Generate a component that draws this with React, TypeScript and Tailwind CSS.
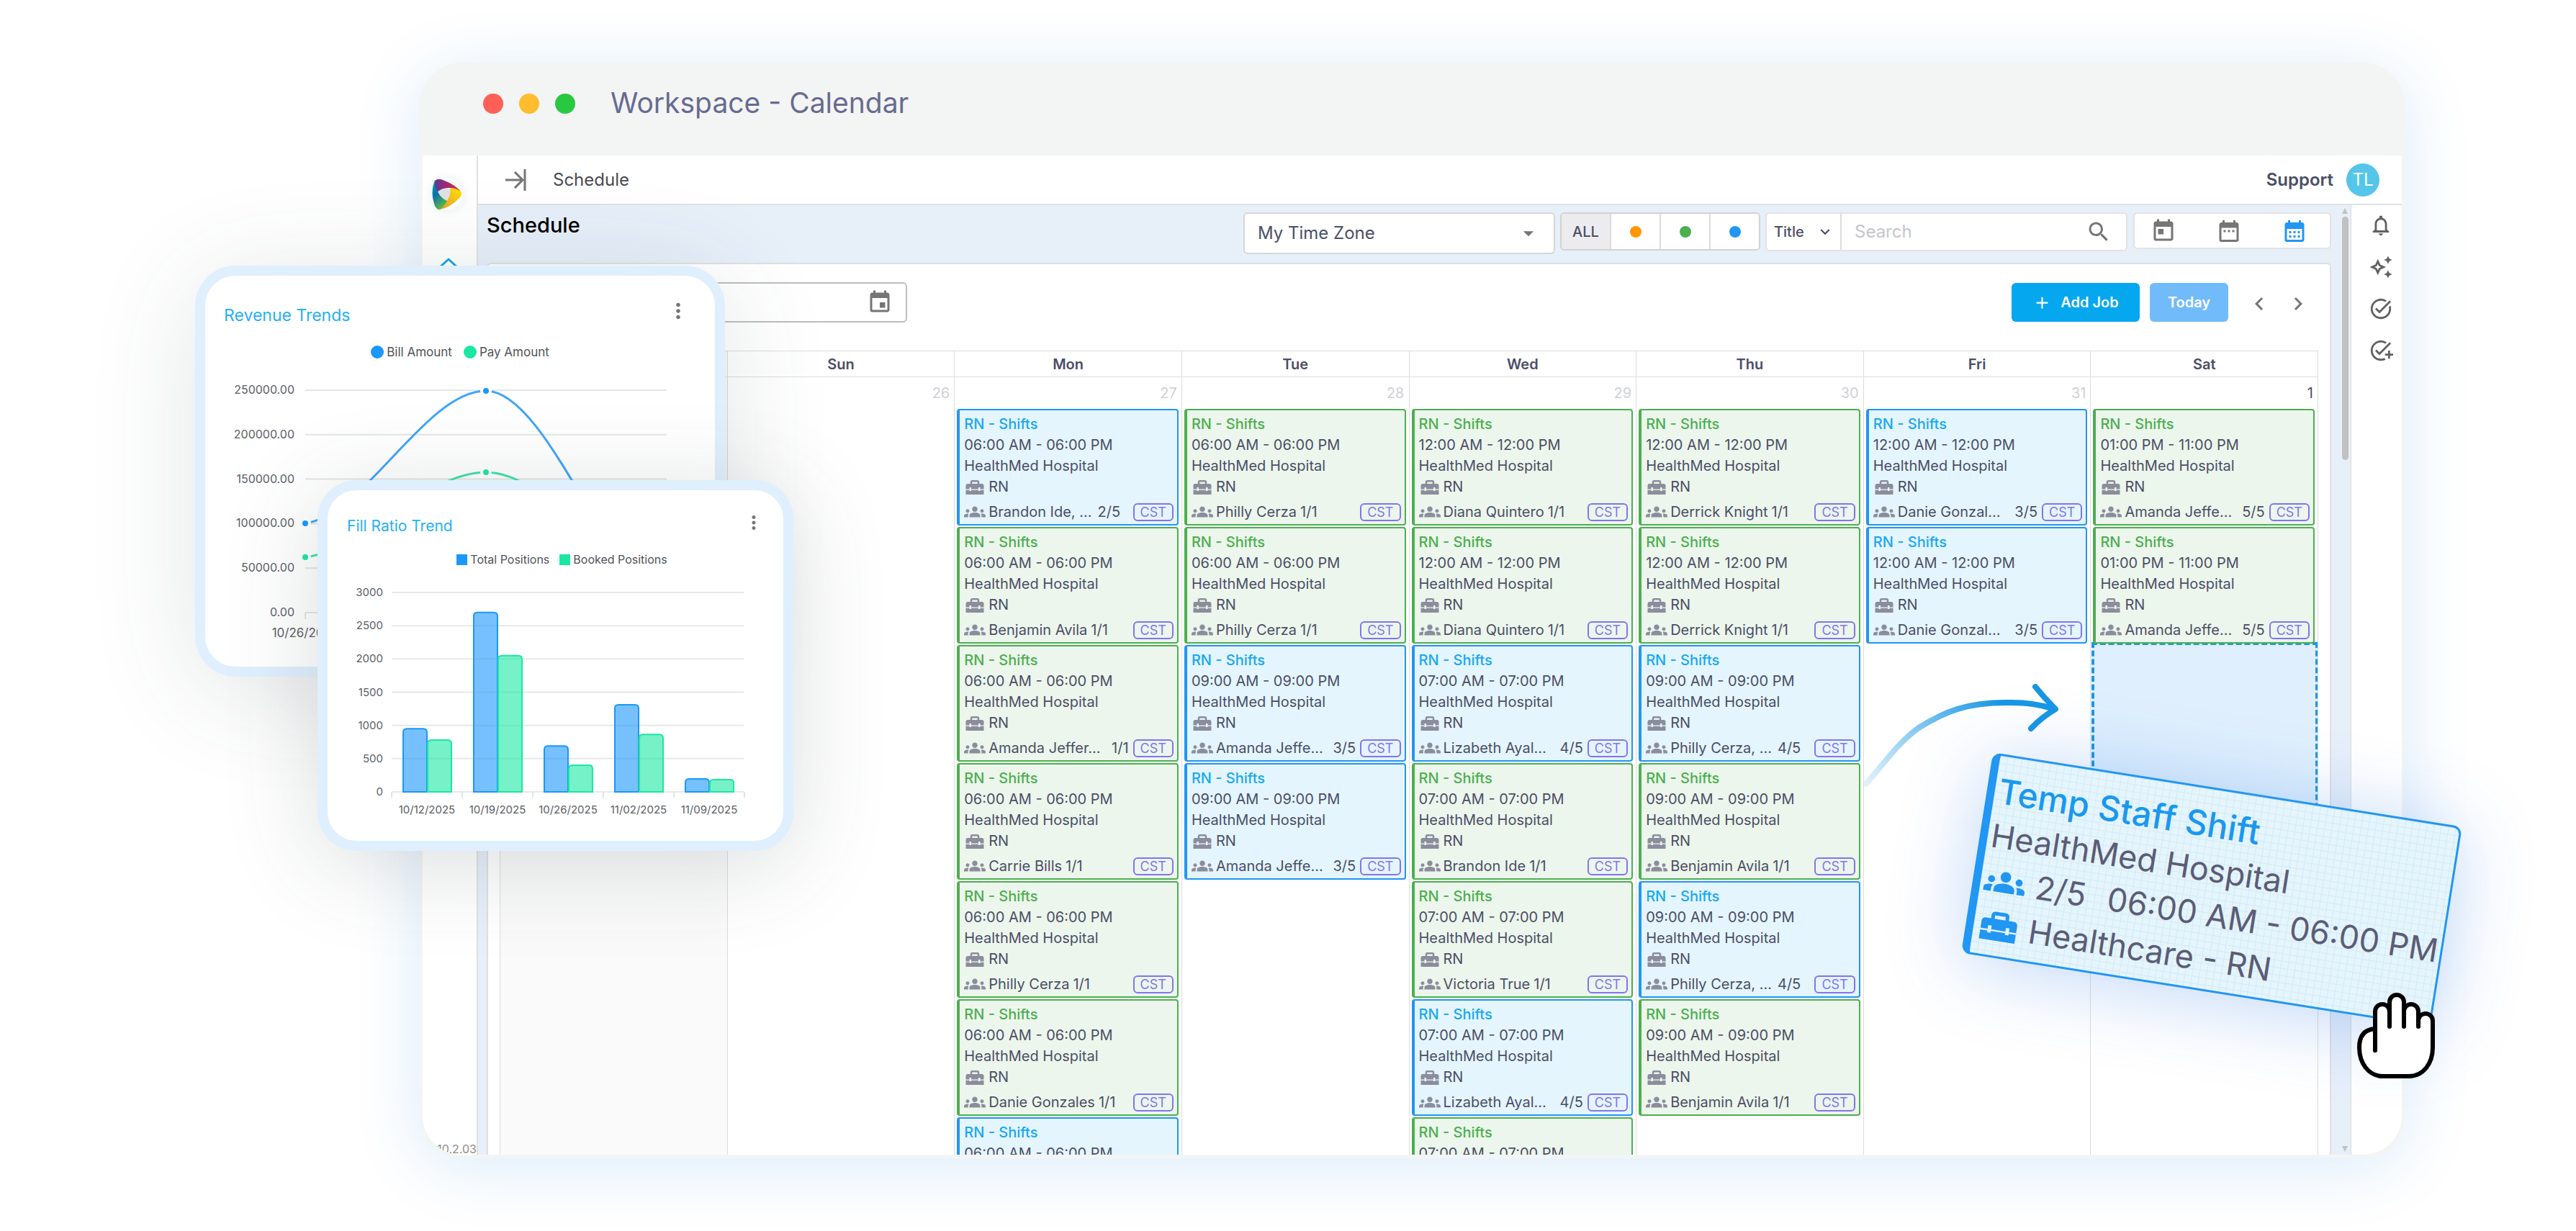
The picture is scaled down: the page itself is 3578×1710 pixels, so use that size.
import type { ReactNode } from "react";
import {
  MdAdd,
  MdAddTask,
  MdArrowDropDown,
  MdCalendarMonth,
  MdChevronLeft,
  MdChevronRight,
  MdDateRange,
  MdEvent,
  MdGroups,
  MdHomeRepairService,
  MdKeyboardArrowDown,
  MdMoreVert,
  MdNotificationsNone,
  MdOutlineAutoAwesome,
  MdOutlineHome,
  MdSearch,
  MdTaskAlt,
  MdToday,
} from "react-icons/md";

type Shift = {
  tone: "blue" | "green";
  time: string;
  name: string;
  count: string;
};

type Day = {
  label: string;
  date: string;
  current?: boolean;
  shifts: Shift[];
};

const SIX = "06:00 AM - 06:00 PM";
const SEVEN = "07:00 AM - 07:00 PM";
const NINE = "09:00 AM - 09:00 PM";
const TWELVE = "12:00 AM - 12:00 PM";
const ONE = "01:00 PM - 11:00 PM";

const green = (time: string, name: string, count = "1/1"): Shift => ({
  tone: "green",
  time,
  name,
  count,
});

const blue = (time: string, name: string, count: string): Shift => ({
  tone: "blue",
  time,
  name,
  count,
});

const days: Day[] = [
  { label: "Sun", date: "26", shifts: [] },
  {
    label: "Mon",
    date: "27",
    shifts: [
      blue(SIX, "Brandon Ide, ...", "2/5"),
      green(SIX, "Benjamin Avila"),
      green(SIX, "Amanda Jeffer..."),
      green(SIX, "Carrie Bills"),
      green(SIX, "Philly Cerza"),
      green(SIX, "Danie Gonzales"),
      blue(SIX, "Brandon Ide, ...", "2/5"),
    ],
  },
  {
    label: "Tue",
    date: "28",
    shifts: [
      green(SIX, "Philly Cerza"),
      green(SIX, "Philly Cerza"),
      blue(NINE, "Amanda Jeffe...", "3/5"),
      blue(NINE, "Amanda Jeffe...", "3/5"),
    ],
  },
  {
    label: "Wed",
    date: "29",
    shifts: [
      green(TWELVE, "Diana Quintero"),
      green(TWELVE, "Diana Quintero"),
      blue(SEVEN, "Lizabeth Ayal...", "4/5"),
      green(SEVEN, "Brandon Ide"),
      green(SEVEN, "Victoria True"),
      blue(SEVEN, "Lizabeth Ayal...", "4/5"),
      green(SEVEN, "Victoria True"),
    ],
  },
  {
    label: "Thu",
    date: "30",
    shifts: [
      green(TWELVE, "Derrick Knight"),
      green(TWELVE, "Derrick Knight"),
      blue(NINE, "Philly Cerza, ...", "4/5"),
      green(NINE, "Benjamin Avila"),
      blue(NINE, "Philly Cerza, ...", "4/5"),
      green(NINE, "Benjamin Avila"),
    ],
  },
  {
    label: "Fri",
    date: "31",
    shifts: [
      blue(TWELVE, "Danie Gonzal...", "3/5"),
      blue(TWELVE, "Danie Gonzal...", "3/5"),
    ],
  },
  {
    label: "Sat",
    date: "1",
    current: true,
    shifts: [
      green(ONE, "Amanda Jeffe...", "5/5"),
      green(ONE, "Amanda Jeffe...", "5/5"),
    ],
  },
];

const tones = {
  blue: {
    card: "border-[#2196f3] bg-[#e4f5fd]",
    title: "text-[#17a8f2]",
  },
  green: {
    card: "border-[#4caf50] bg-[#ecf6ec]",
    title: "text-[#4caf50]",
  },
};

const ShiftCard = ({ shift }: { shift: Shift }) => {
  const tone = tones[shift.tone];
  // single-name truncations push the count against the badge
  const pushed = shift.name.endsWith("...") && !shift.name.includes(",");

  return (
    <div
      className={`rounded-[4px] border-2 border-l-4 pt-[5px] pr-[5px] pb-px pl-[6px] text-[20px] leading-[29px] whitespace-nowrap text-[#4b4e66] ${tone.card}`}
    >
      <p className={`font-medium ${tone.title}`}>RN - Shifts</p>
      <p>{shift.time}</p>
      <p>HealthMed Hospital</p>
      <p className="flex h-[29px] items-center gap-1">
        <MdHomeRepairService size={30} className="text-[#8b8d9c]" />
        RN
      </p>
      <div className="mt-1 flex h-8 items-center">
        <MdGroups size={30} className="mr-1 shrink-0 text-[#8b8d9c]" />
        <span>{shift.name}</span>
        <span
          className={
            pushed
              ? "mr-[6px] ml-auto"
              : shift.name.includes(",")
                ? "ml-2"
                : "ml-[5px]"
          }
        >
          {shift.count}
        </span>
        <span
          className={`rounded-[6px] border-2 border-[#8474ef] px-2 text-[18px] leading-[21px] text-[#8474ef] ${pushed ? "" : "ml-auto"}`}
        >
          CST
        </span>
      </div>
    </div>
  );
};

const CalendarTable = () => (
  <table className="w-full table-fixed border-collapse text-[#4b4e66]">
    <thead>
      <tr className="h-9 border border-[#dcdcdc] text-[20px] leading-[34px] font-semibold">
        <th aria-label="Week" className="border border-[#dcdcdc] bg-[#fafafa]" />
        {days.map((day) => (
          <th key={day.label} className="border border-[#dcdcdc] font-semibold">
            {day.label}
          </th>
        ))}
      </tr>
    </thead>
    <tbody>
      <tr className="h-[1280px] align-top">
        <td className="border border-[#dcdcdc] bg-[#fafafa]" />
        {days.map((day) => (
          <td key={day.label} className="border border-[#dcdcdc] pr-1 pl-[3px]">
            <p
              className={`pr-[2px] text-right text-[20px] leading-[44px] ${day.current ? "" : "text-[#cfd0d6]"}`}
            >
              {day.date}
            </p>
            <div className="flex flex-col gap-[2px]">
              {day.shifts.map((shift, i) => (
                <ShiftCard key={i} shift={shift} />
              ))}
            </div>
            {day.current && (
              <div className="-mt-[2px] -mr-[5px] -ml-[2px] h-[290px] border-4 border-dashed border-[#1e96e6] bg-[#dfeffd]" />
            )}
          </td>
        ))}
      </tr>
    </tbody>
  </table>
);

const StatusButton = ({ label, color }: { label: string; color: string }) => (
  <button
    aria-label={label}
    className="flex flex-1 items-center justify-center border-l-2 border-[#dcdcdc] bg-white"
  >
    <span className={`size-4 rounded-full ${color}`} />
  </button>
);

const Toolbar = () => (
  <div className="flex h-20 items-start gap-[7px] pt-[10px] pl-3 text-[#4b4e66]">
    <h1 className="mr-auto text-[29px] leading-[36px] font-medium text-black">
      Schedule
    </h1>
    <label className="relative flex h-[58px] w-[433px] items-center rounded-[6px] border-2 border-[#d6d6d6] bg-white">
      <select
        aria-label="Time zone"
        className="h-full w-full appearance-none bg-transparent px-[18px] text-[24px]"
      >
        <option>My Time Zone</option>
      </select>
      <MdArrowDropDown
        size={34}
        className="pointer-events-none absolute right-[18px] text-[#757575]"
      />
    </label>
    <div className="flex h-[53px] w-[278px] overflow-hidden rounded-[6px] border-2 border-[#d2d2d2]">
      <button className="flex-1 bg-[#ececee] text-[20px] font-medium">ALL</button>
      <StatusButton label="Orange" color="bg-[#ff9800]" />
      <StatusButton label="Green" color="bg-[#4caf50]" />
      <StatusButton label="Blue" color="bg-[#2196f3]" />
    </div>
    <div className="flex h-[54px] w-[503px] items-center rounded-[6px] border-2 border-[#e2e2e2] bg-white">
      <label className="relative flex h-full w-[104px] shrink-0 items-center border-r-2 border-[#dcdcdc]">
        <select
          aria-label="Search by"
          className="h-full w-full appearance-none bg-transparent pl-[10px] text-[20px] font-medium"
        >
          <option>Title</option>
        </select>
        <MdKeyboardArrowDown
          size={26}
          className="pointer-events-none absolute right-2"
        />
      </label>
      <input
        aria-label="Search"
        placeholder="Search"
        className="min-w-0 flex-1 px-[18px] text-[24px] outline-none placeholder:text-[#c4c5cc]"
      />
      <button aria-label="Run search" className="mr-5">
        <MdSearch size={36} className="text-[#757575]" />
      </button>
    </div>
    <div className="ml-px flex h-[51px] w-[275px] gap-[55px] rounded-[6px] border-2 border-[#e2e2e2] bg-white pl-[22px] text-[#757575]">
      <button aria-label="Day">
        <MdToday size={36} />
      </button>
      <button aria-label="Week">
        <MdDateRange size={36} />
      </button>
      <button aria-label="Month" className="text-[#2196f3]">
        <MdCalendarMonth size={36} />
      </button>
    </div>
  </div>
);

const CalendarHeader = () => (
  <div className="flex h-[120px] items-start pt-[25px]">
    <label className="flex h-14 w-[566px] items-center rounded-[6px] border-2 border-[#bdbdbd] bg-white pr-[18px]">
      <input
        aria-label="Date"
        className="min-w-0 flex-1 bg-transparent px-4 text-[24px] outline-none"
      />
      <MdEvent size={36} className="text-[#757575]" />
    </label>
    <button className="mt-[1px] ml-auto flex h-[54px] w-[178px] items-center justify-center gap-3 rounded-[6px] bg-[#05a7ef] text-[20px] font-semibold text-white">
      <MdAdd size={27} />
      Add Job
    </button>
    <button className="mt-[1px] ml-[14px] h-[54px] w-[109px] rounded-[6px] bg-[#72bbfb] text-[20px] font-semibold text-white">
      Today
    </button>
    <button aria-label="Previous" className="mt-[12px] ml-[25px]">
      <MdChevronLeft size={36} className="text-[#757575]" />
    </button>
    <button aria-label="Next" className="mt-[12px] mr-[10px] ml-[18px]">
      <MdChevronRight size={36} className="text-[#757575]" />
    </button>
  </div>
);

const Logo = () => (
  <svg width="42" height="44" viewBox="0 0 42 44" aria-label="Logo">
    <defs>
      <linearGradient id="logoTop" x1="0" y1="0" x2="1" y2="0">
        <stop offset="0" stopColor="#5b3a97" />
        <stop offset="0.45" stopColor="#a32a72" />
        <stop offset="1" stopColor="#d22f3f" />
      </linearGradient>
      <linearGradient id="logoRight" x1="0" y1="1" x2="1" y2="0">
        <stop offset="0" stopColor="#e79a3c" />
        <stop offset="1" stopColor="#ffe500" />
      </linearGradient>
      <linearGradient id="logoLeft" x1="0" y1="0" x2="0.4" y2="1">
        <stop offset="0" stopColor="#00a79d" />
        <stop offset="0.5" stopColor="#0a6fae" />
        <stop offset="1" stopColor="#5bb947" />
      </linearGradient>
    </defs>
    <path d="M6 14H28V33H18Z" fill="#dde1e4" />
    <path
      d="M41 20Q42 23 38 27Q26 40 11 43Q9 42 21 31Q27 22 25 12Q37 10 41 20Z"
      fill="url(#logoRight)"
    />
    <path
      d="M4 3Q9 -1 15 2Q34 9 41 20Q36 13 26 13Q14 12 7 19Q2 10 4 3Z"
      fill="url(#logoTop)"
    />
    <path
      d="M4 3Q3 11 8 18Q13 28 21 31Q17 39 11 43Q7 44 4 38Q-3 18 4 3Z"
      fill="url(#logoLeft)"
    />
  </svg>
);

const AppWindow = () => (
  <section className="flex min-h-0 flex-1 flex-col rounded-[60px] bg-[#f3f5f4] px-[5px] pb-[5px] shadow-[0_12px_90px_rgba(33,130,225,0.16)]">
    <div className="flex h-[129px] shrink-0 items-center pb-4 pl-[84px]">
      <span className="size-7 rounded-full bg-[#ff5f57]" />
      <span className="ml-[22px] size-7 rounded-full bg-[#febc2e]" />
      <span className="ml-[22px] size-7 rounded-full bg-[#28c840]" />
      <span className="ml-[49px] text-[39px] text-[#676b91]">
        Workspace - Calendar
      </span>
    </div>

    <div className="flex min-h-0 flex-1 overflow-hidden rounded-b-[54px] bg-white">
      <nav className="flex w-[77px] shrink-0 flex-col items-center border-r-2 border-[#e0e0e0] pt-8">
        <div className="mr-2 rounded-full shadow-[0_0_14px_rgba(40,60,90,0.1)]">
          <Logo />
        </div>
        <a href="#home" aria-label="Home" className="mt-[62px] mr-1">
          <MdOutlineHome size={34} className="text-[#0ea5e9]" />
        </a>
        <span className="mt-auto self-end text-[16px] leading-[16px] text-[#8c8c8c]">
          2.10.2.03
        </span>
      </nav>

      <div className="flex min-w-0 flex-1 flex-col">
        <header className="flex h-[69px] shrink-0 items-center border-b-2 border-[#e2e2e2] pr-[31px] pl-[37px] text-[24px]">
          <button aria-label="Expand menu">
            <svg
              width="30"
              height="30"
              viewBox="0 0 30 30"
              fill="none"
              stroke="#757575"
              strokeWidth="3"
            >
              <path d="M1 15H25M14 4 25 15 14 26M28 0V30" />
            </svg>
          </button>
          <span className="ml-[37px] text-[#4a4a4f]">Schedule</span>
          <a href="#support" className="ml-auto font-semibold text-[#4b4e66]">
            Support
          </a>
          <span className="ml-[18px] flex size-[46px] items-center justify-center rounded-full bg-[#56c5ea] text-white">
            TL
          </span>
        </header>

        <div className="flex min-h-0 flex-1">
          <div className="flex min-w-0 flex-1 bg-[#e7eff9]">
            <main className="flex min-w-0 flex-1 flex-col">
              <Toolbar />
              <div className="ml-[12px] min-h-0 flex-1 overflow-hidden rounded-t-[6px] border-2 border-b-0 border-[#e0e0e0] bg-white pr-4 pl-4">
                <CalendarHeader />
                <CalendarTable />
              </div>
            </main>
            <div className="flex w-7 shrink-0 flex-col items-center border-r border-[#dcdcdc] py-1 pl-[11px]">
              <svg width="10" height="8" viewBox="0 0 10 8" fill="#c1c1c1">
                <path d="M5 0 9 8H1Z" />
              </svg>
              <div className="mt-1 h-[338px] w-[9px] rounded-full bg-[#c1c1c1]" />
              <svg
                width="10"
                height="8"
                viewBox="0 0 10 8"
                fill="#c1c1c1"
                className="mt-auto"
              >
                <path d="M5 8 9 0H1Z" />
              </svg>
            </div>
          </div>
          <aside className="flex w-[70px] shrink-0 flex-col items-center gap-6 pt-[11px] pl-3 text-[#616161]">
            <button aria-label="Notifications">
              <MdNotificationsNone size={34} />
            </button>
            <button aria-label="Assistant">
              <MdOutlineAutoAwesome size={34} />
            </button>
            <button aria-label="Tasks">
              <MdTaskAlt size={34} />
            </button>
            <button aria-label="Add task">
              <MdAddTask size={34} />
            </button>
          </aside>
        </div>
      </div>
    </div>
  </section>
);

const revenueTicks = [
  "250000.00",
  "200000.00",
  "150000.00",
  "100000.00",
  "50000.00",
  "0.00",
];

const LegendItem = ({
  swatch,
  children,
}: {
  swatch: string;
  children: ReactNode;
}) => (
  <span className="flex items-center gap-1">
    <span className={swatch} />
    {children}
  </span>
);

const RevenueCard = () => (
  <section className="absolute top-[369px] left-[271px] flex h-[571px] w-[736px] flex-col rounded-[56px] border-[14px] border-[#dfeffd] bg-white shadow-[0_20px_150px_rgba(60,70,80,0.14)]">
    <div className="flex items-start justify-between pt-8 pr-[34px] pl-[26px]">
      <h2 className="mt-[9px] text-[23px] leading-[28px] text-[#29b0f0]">
        Revenue Trends
      </h2>
      <button aria-label="Revenue options">
        <MdMoreVert size={34} className="text-[#757575]" />
      </button>
    </div>
    <div className="mt-[27px] flex justify-center gap-4 text-[17px] leading-[20px] text-[#4f5459]">
      <LegendItem swatch="size-[18px] rounded-full bg-[#1a98fb]">
        Bill Amount
      </LegendItem>
      <LegendItem swatch="size-[18px] rounded-full bg-[#1be7a3]">
        Pay Amount
      </LegendItem>
    </div>
    <svg
      viewBox="0 0 708 400"
      className="mt-[10px] w-full"
      fontFamily="Inter, sans-serif"
      fill="#5b6065"
    >
      {revenueTicks.map((tick, i) => (
        <g key={tick}>
          <path
            d={`M139 ${33 + i * 61.8}H641`}
            stroke="#e3e5e7"
            strokeWidth="2"
          />
          <text x="124" y={38 + i * 61.8} textAnchor="end" fontSize="16">
            {tick}
          </text>
        </g>
      ))}
      <path d="M139 342V351" stroke="#e3e5e7" strokeWidth="2" />
      <text x="139" y="376" textAnchor="middle" fontSize="17">
        10/26/2025
      </text>
      <g fill="none" strokeWidth="3">
        <path
          d="M139 218C223 206 306 34 390 34C473 34 558 290 641 342"
          stroke="#3ea5fb"
        />
        <path
          d="M139 265C223 255 306 147 390 147C473 147 558 280 641 300"
          stroke="#3ce2a9"
        />
      </g>
      <g stroke="#fff" strokeWidth="4">
        <circle cx="139" cy="218" r="6" fill="#1a98fb" />
        <circle cx="390" cy="34" r="6" fill="#1a98fb" />
        <circle cx="139" cy="265" r="6" fill="#1be7a3" />
        <circle cx="390" cy="147" r="6" fill="#1be7a3" />
      </g>
    </svg>
  </section>
);

const fillData = [
  { date: "10/12/2025", total: 950, booked: 780 },
  { date: "10/19/2025", total: 2700, booked: 2050 },
  { date: "10/26/2025", total: 690, booked: 400 },
  { date: "11/02/2025", total: 1310, booked: 865 },
  { date: "11/09/2025", total: 195, booked: 185 },
];

const fillTicks = [3000, 2500, 2000, 1500, 1000, 500, 0];

const barPath = (x: number, value: number) => {
  const top = 302 - (value / 3000) * 277;
  return `M${x} 302V${top + 5}Q${x} ${top} ${x + 5} ${top}H${x + 28}Q${x + 33} ${top} ${x + 33} ${top + 5}V302Z`;
};

const FillRatioCard = () => (
  <section className="absolute top-[667px] left-[441px] flex h-[515px] w-[661px] flex-col rounded-[54px] border-[14px] border-[#dfeffd] bg-white shadow-[0_20px_130px_rgba(60,70,80,0.18)]">
    <div className="flex items-start justify-between pt-[30px] pr-[26px] pl-[27px]">
      <h2 className="mt-[6px] text-[21px] leading-[28px] text-[#29b0f0]">
        Fill Ratio Trend
      </h2>
      <button aria-label="Fill ratio options">
        <MdMoreVert size={30} className="text-[#757575]" />
      </button>
    </div>
    <div className="mt-[22px] flex justify-center gap-[14px] pl-[18px] text-[16px] leading-[20px] text-[#4f5459]">
      <LegendItem swatch="size-[15px] bg-[#1a98fb]">Total Positions</LegendItem>
      <LegendItem swatch="size-[15px] bg-[#1be7a3]">Booked Positions</LegendItem>
    </div>
    <svg
      viewBox="0 0 633 360"
      className="mt-[11px] w-full"
      fontFamily="Inter, sans-serif"
      fill="#5b6065"
    >
      {fillTicks.map((tick, i) => (
        <g key={tick}>
          <path
            d={`M89 ${25 + (i * 277) / 6}H578`}
            stroke="#e6e8ea"
            strokeWidth="2"
          />
          <text
            x="77"
            y={30 + (i * 277) / 6}
            textAnchor="end"
            fontSize="15"
          >
            {tick}
          </text>
        </g>
      ))}
      {[0, 1, 2, 3, 4, 5].map((i) => (
        <path
          key={i}
          d={`M${89 + i * 98} 302V310`}
          stroke="#e1e3e5"
          strokeWidth="2"
        />
      ))}
      {fillData.map((row, i) => (
        <g key={row.date}>
          <path
            d={barPath(105 + i * 98, row.total)}
            fill="#1a98fb"
            fillOpacity="0.6"
            stroke="#1a98fb"
            strokeWidth="2"
          />
          <path
            d={barPath(139 + i * 98, row.booked)}
            fill="#1be7a3"
            fillOpacity="0.6"
            stroke="#1be7a3"
            strokeWidth="2"
          />
          <text x={138 + i * 98} y="332" textAnchor="middle" fontSize="15">
            {row.date}
          </text>
        </g>
      ))}
    </svg>
  </section>
);

const DragArrow = () => (
  <svg
    width="290"
    height="160"
    viewBox="0 0 290 160"
    fill="none"
    className="pointer-events-none absolute top-[940px] right-[708px]"
  >
    <defs>
      <linearGradient
        id="arrowFade"
        x1="10"
        y1="150"
        x2="200"
        y2="36"
        gradientUnits="userSpaceOnUse"
      >
        <stop offset="0" stopColor="#1797e5" stopOpacity="0.12" />
        <stop offset="1" stopColor="#1797e5" />
      </linearGradient>
    </defs>
    <g strokeWidth="8" strokeLinecap="round" strokeLinejoin="round">
      <path
        d="M12 149C36 121 58 90 85 71C122 48 152 36 206 36C234 36 252 38 274 45"
        stroke="url(#arrowFade)"
      />
      <path d="M247 14Q260 30 275 45Q256 56 241 72" stroke="#1797e5" />
    </g>
  </svg>
);

const DraggedShift = () => (
  <div className="absolute top-[1095px] right-[176px] h-[282px] w-[660px] rotate-[9deg] rounded-[12px] border-[3px] border-l-[11px] border-[#2196f3] bg-[#e4f5fd] bg-[linear-gradient(#d6e9f0_1px,transparent_1px),linear-gradient(90deg,#d6e9f0_1px,transparent_1px)] bg-[size:10px_10px] pt-[18px] pl-[5px] text-[45px] leading-[62px] whitespace-nowrap text-[#5c5c76] shadow-[0_10px_110px_rgba(33,110,225,0.28)]">
    <p className="text-[48px] font-medium text-[#1a98f0]">Temp Staff Shift</p>
    <p>HealthMed Hospital</p>
    <p className="flex items-center">
      <MdGroups size={58} className="mr-[14px] text-[#2196f3]" />
      <span className="mr-[30px]">2/5</span>
      06:00 AM - 06:00 PM
    </p>
    <p className="flex items-center">
      <MdHomeRepairService size={60} className="mr-[12px] text-[#2196f3]" />
      Healthcare - RN
    </p>
  </div>
);

const GrabHand = () => (
  <svg
    width="108"
    height="120"
    viewBox="0 0 108 120"
    fill="#fff"
    stroke="#000"
    strokeWidth="6"
    strokeLinecap="round"
    strokeLinejoin="round"
    className="pointer-events-none absolute top-[1379px] right-[196px]"
  >
    <path d="M25 80V26A10 10 0 0 1 45 26V13A10 10 0 0 1 65 13V26A10 10 0 0 1 85 26V39A10 10 0 0 1 105 39V76C105 98 92 116 72 116H36C16 116 3 98 3 76C3 60 10 51 25 50Z" />
    <path d="M45 26V47M65 26V47M85 26V47M25 50V80" />
  </svg>
);

export default function App() {
  return (
    <div className="relative flex h-screen flex-col overflow-hidden bg-white pt-[87px] pr-[237px] pb-[101px] pl-[582px] font-['Inter',sans-serif]">
      <AppWindow />
      <RevenueCard />
      <FillRatioCard />
      <DragArrow />
      <DraggedShift />
      <GrabHand />
    </div>
  );
}
